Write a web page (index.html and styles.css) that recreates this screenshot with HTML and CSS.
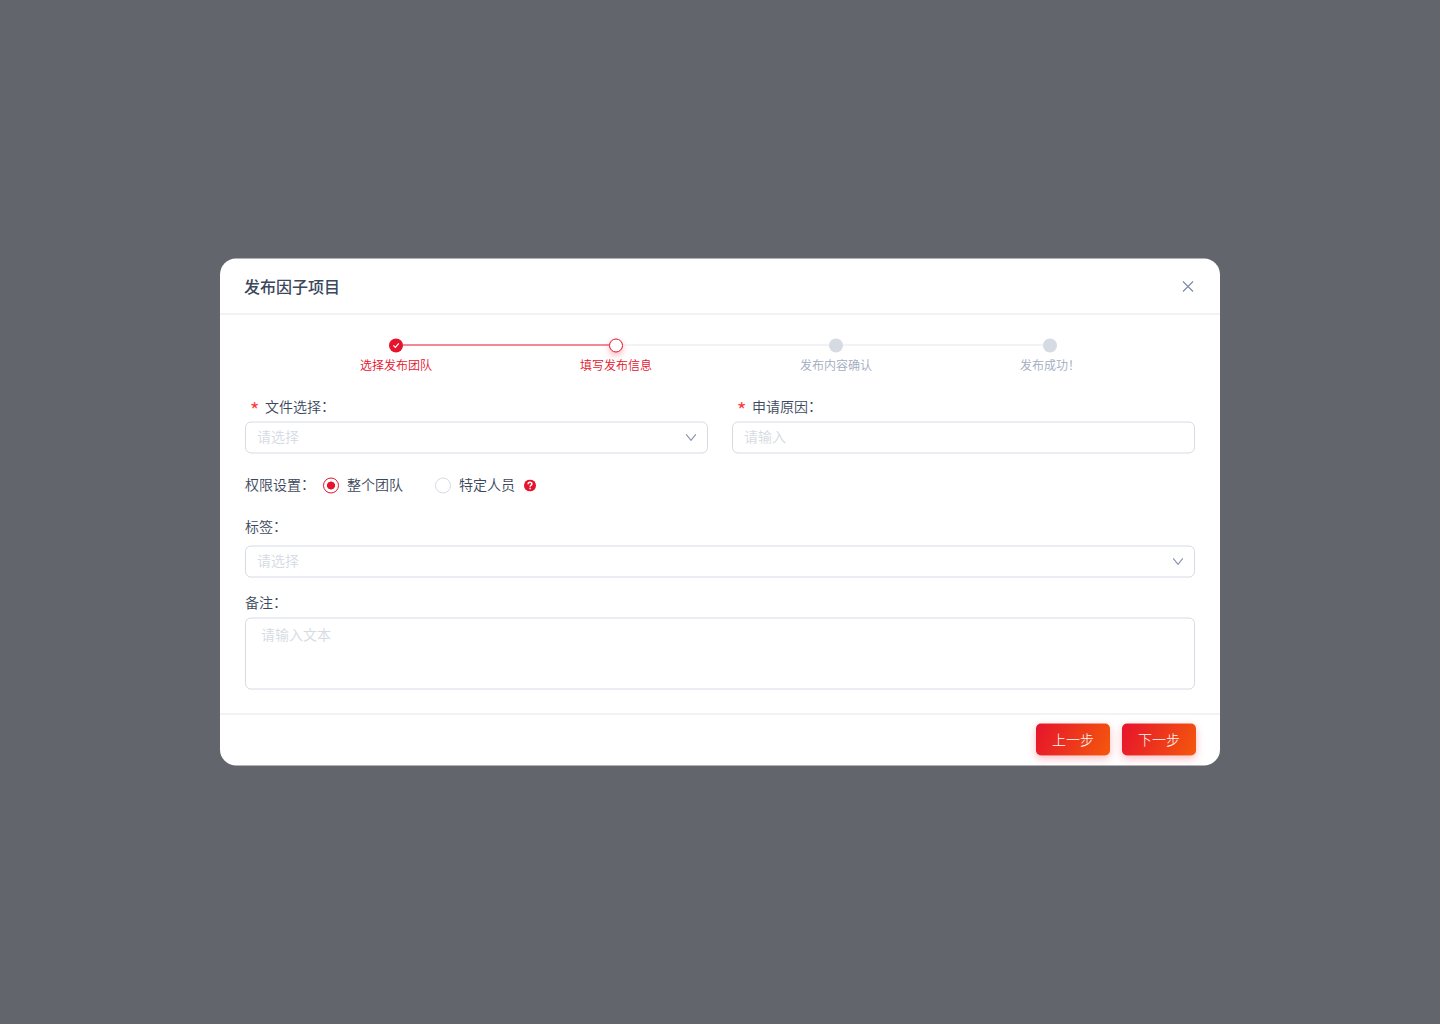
FILE: index.html
```html
<!DOCTYPE html>
<html lang="zh-CN">
<head>
<meta charset="utf-8">
<title>发布因子项目</title>
<link rel="stylesheet" href="styles.css">
</head>
<body>
<section class="modal">
  <header class="modal-header">
    <h1 class="title">发布因子项目</h1>
    <svg class="close" width="12" height="12" viewBox="0 0 12 12"><path d="M1 1l10 10M11 1L1 11"/></svg>
  </header>
  <main class="modal-body">
    <div class="rail">
      <span class="dot dot-done"><svg width="14" height="14" viewBox="0 0 14 14"><path d="M4.3 6.9l2.1 2 3.4-4"/></svg></span>
      <span class="line line-done"></span>
      <span class="dot dot-current"></span>
      <span class="line"></span>
      <span class="dot"></span>
      <span class="line line-short"></span>
      <span class="dot"></span>
    </div>
    <div class="step-names">
      <span class="step-name active">选择发布团队</span>
      <span class="step-name active">填写发布信息</span>
      <span class="step-name">发布内容确认</span>
      <span class="step-name">发布成功！</span>
    </div>
    <div class="columns">
      <div class="column">
        <div class="label required"><span class="star">*</span><span>文件选择<span class="colon">：</span></span></div>
        <div class="field"><span>请选择</span><svg class="chevron" width="12" height="8" viewBox="0 0 12 8"><path d="M1.2 .8L6 6.9L10.8 .8"/></svg></div>
      </div>
      <div class="column">
        <div class="label required"><span class="star">*</span><span>申请原因<span class="colon">：</span></span></div>
        <div class="field"><span>请输入</span></div>
      </div>
    </div>
    <div class="radios">
      <span class="radio-label">权限设置<span class="colon">：</span></span>
      <span class="radio checked"></span><span class="radio-text first">整个团队</span>
      <span class="radio"></span><span class="radio-text">特定人员</span>
      <svg class="help" width="12" height="12" viewBox="0 0 12 12"><circle cx="6" cy="6" r="6"/><path d="M4.1 4.7C4.1 2.1 7.9 2.2 7.9 4.5C7.9 5.8 6.1 5.6 6.1 7.3"/><path d="M6.1 8.2v1.5"/></svg>
    </div>
    <div class="label label-tag">标签<span class="colon">：</span></div>
    <div class="field field-tag"><span>请选择</span><svg class="chevron" width="12" height="8" viewBox="0 0 12 8"><path d="M1.2 .8L6 6.9L10.8 .8"/></svg></div>
    <div class="label">备注<span class="colon">：</span></div>
    <div class="field area"><span>请输入文本</span></div>
  </main>
  <footer class="modal-footer">
    <button class="button">上一步</button>
    <button class="button">下一步</button>
  </footer>
</section>
</body>
</html>
```

FILE: styles.css
```css
* { box-sizing: border-box; }
body {
  margin: 0;
  height: 1024px;
  padding-top: 258px;
  background: #62656c;
  font-family: "Noto Sans CJK SC", sans-serif;
  font-size: 14px;
  font-weight: 350;
  line-height: 20px;
  color: #3b475c;
  overflow: hidden;
}
.modal {
  width: 1000px;
  height: 507px;
  margin: 0 auto;
  background: #fff;
  border-radius: 16px;
  transform: translateY(.5px);
}
.modal-header {
  height: 56px;
  padding: 0 26px 0 24px;
  border-bottom: 1px solid #e6e8f0;
  display: flex;
  align-items: center;
  justify-content: space-between;
}
.title { margin: 0 0 2px; font-size: 16px; line-height: 24px; font-weight: 500; }
.close { fill: none; stroke: #7b8aa5; stroke-width: 1.1; }
.modal-body { height: 399px; padding: 24px 25px; }
.rail { display: flex; align-items: center; height: 14px; padding-left: 144px; }
.dot { width: 14px; height: 14px; border-radius: 50%; background: #d5dae3; }
.dot-done { background: #e6132d; }
.dot-done svg { display: block; fill: none; stroke: #fff; stroke-width: 1.2; }
.dot-current { background: #fff; border: 1px solid #e6132d; box-shadow: 0 3px 6px rgba(230, 19, 45, .3); }
.line { width: 206px; height: 1px; margin-bottom: 1px; background: #e6e8f0; }
.line-done { background: #e6132d; }
.line-short { width: 200px; }
.step-names {
  display: flex;
  gap: 148px;
  margin: 2px 0 21px;
  padding-left: 115px;
  font-size: 12px;
  color: #a0abc0;
}
.step-name { white-space: nowrap; }
.active { color: #e6132d; }
.columns { display: flex; gap: 24px; }
.column { flex: 1; }
.label { height: 20px; margin-bottom: 6px; }
.colon { line-height: 0; vertical-align: 1px; }
.required { display: flex; padding-left: 5px; }
.star { width: 15px; color: #ff3b3b; font-size: 20px; font-weight: 400; line-height: 28px; height: 20px; }
.field {
  display: flex;
  align-items: center;
  justify-content: space-between;
  height: 32px;
  padding: 0 10px 0 11px;
  border: 1px solid #d5dae3;
  border-radius: 6px;
  color: #d5dae3;
}
.field span { margin-bottom: 4px; }
.chevron { fill: none; stroke: #8592ab; stroke-width: 1.1; }
.radios { display: flex; align-items: center; height: 20px; margin: 22px 0 20px; }
.radio-label { width: 78px; margin-bottom: 4px; }
.radio { width: 16px; height: 16px; border: 1px solid #d5dae3; border-radius: 50%; }
.checked { border-color: #e6132d; background: radial-gradient(circle, #e6132d 3.7px, transparent 4.3px); }
.radio-text { margin: 0 0 4px 8px; }
.first { margin-right: 32px; }
.help { margin-left: 9px; fill: #e6132d; }
.help path { fill: none; stroke: #fff; stroke-width: 1.5; }
.label-tag { margin-bottom: 10px; }
.field-tag { margin-bottom: 14px; }
.area { height: 72px; align-items: flex-start; padding: 5px 15px; }
.modal-footer { display: flex; justify-content: flex-end; gap: 12px; height: 52px; padding: 9px 24px 0; border-top: 1px solid #e6e8f0; }
.button {
  width: 74px;
  height: 32px;
  padding: 0 0 2px;
  border: 0;
  border-radius: 5px;
  background: linear-gradient(115deg, #e6132d, #f4580c);
  box-shadow: 0 3px 8px rgba(230, 19, 45, .28);
  color: #fff;
  font: inherit;
  font-weight: 300;
}
```
